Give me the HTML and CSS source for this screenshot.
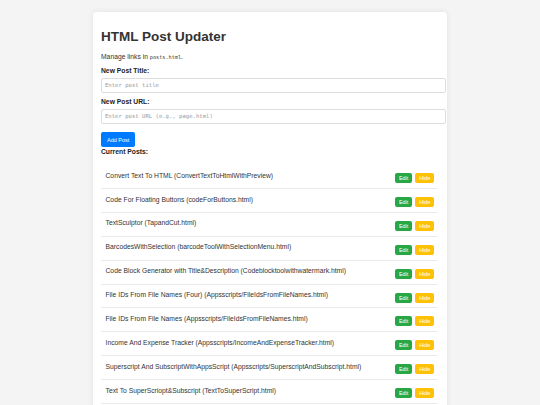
FILE: index.html
```html
<!DOCTYPE html>
<html lang="en">
<head>
<meta charset="utf-8">
<title>HTML Post Updater</title>
<link rel="stylesheet" href="styles.css">
</head>
<body>
<div class="card">
  <h1 class="title">HTML Post Updater</h1>
  <p class="intro">Manage links in <code class="code">posts.html</code>.</p>
  <label class="label" for="t">New Post Title:</label>
  <input class="field" id="t" type="text" placeholder="Enter post title">
  <label class="label" for="u">New Post URL:</label>
  <input class="field" id="u" type="text" placeholder="Enter post URL (e.g., page.html)">
  <button class="add-btn">Add Post</button>
  <div class="section-title">Current Posts:</div>
  <ul class="posts">
    <li class="post"><span class="post-text">Convert Text To HTML (ConvertTextToHtmlWithPreview)</span><span class="actions"><button class="btn edit">Edit</button><button class="btn hide">Hide</button></span></li>
    <li class="post"><span class="post-text">Code For Floating Buttons (codeForButtons.html)</span><span class="actions"><button class="btn edit">Edit</button><button class="btn hide">Hide</button></span></li>
    <li class="post"><span class="post-text">TextSculptor (TapandCut.html)</span><span class="actions"><button class="btn edit">Edit</button><button class="btn hide">Hide</button></span></li>
    <li class="post"><span class="post-text">BarcodesWithSelection (barcodeToolWithSelectionMenu.html)</span><span class="actions"><button class="btn edit">Edit</button><button class="btn hide">Hide</button></span></li>
    <li class="post"><span class="post-text">Code Block Generator with Title&amp;Description (Codeblocktoolwithwatermark.html)</span><span class="actions"><button class="btn edit">Edit</button><button class="btn hide">Hide</button></span></li>
    <li class="post"><span class="post-text">File IDs From File Names (Four) (Appsscripts/FileIdsFromFileNames.html)</span><span class="actions"><button class="btn edit">Edit</button><button class="btn hide">Hide</button></span></li>
    <li class="post"><span class="post-text">File IDs From File Names (Appsscripts/FileIdsFromFileNames.html)</span><span class="actions"><button class="btn edit">Edit</button><button class="btn hide">Hide</button></span></li>
    <li class="post"><span class="post-text">Income And Expense Tracker (Appsscripts/IncomeAndExpenseTracker.html)</span><span class="actions"><button class="btn edit">Edit</button><button class="btn hide">Hide</button></span></li>
    <li class="post"><span class="post-text">Superscript And SubscriptWithAppsScript (Appsscripts/SuperscriptAndSubscript.html)</span><span class="actions"><button class="btn edit">Edit</button><button class="btn hide">Hide</button></span></li>
    <li class="post"><span class="post-text">Text To SuperScriopt&amp;Subscript (TextToSuperScript.html)</span><span class="actions"><button class="btn edit">Edit</button><button class="btn hide">Hide</button></span></li>
  </ul>
</div>
</body>
</html>
```
FILE: styles.css
```css
html, body {
  margin: 0;
  padding: 0;
}
body {
  background: #f4f4f4;
  font-family: "Liberation Sans", Arial, sans-serif;
  font-size: 6.75px;
  color: #333;
  padding-top: 12px;
}
.card {
  box-sizing: border-box;
  width: 354px;
  margin: 0 auto;
  padding: 8px 9px 8px 8px;
  background: #fff;
  border-radius: 4px;
  box-shadow: 0 0 6px rgba(0, 0, 0, 0.08);
}
.title {
  font-size: 13.5px;
  font-weight: bold;
  margin: 9px 0;
  line-height: normal;
  color: #333;
}
.intro {
  margin: 6.75px 0;
  line-height: normal;
}
.code {
  font-family: "DejaVu Sans Mono", "Liberation Mono", monospace;
  font-size: 5.2px;
}
.label {
  display: block;
  font-weight: bold;
  line-height: normal;
  margin-bottom: 3.8px;
  color: #222;
}
.field {
  display: block;
  width: 100%;
  height: 7px;
  padding: 3px;
  margin: 0 0 5.5px;
  border: 1px solid #ddd;
  border-radius: 2px;
  font-family: "DejaVu Sans Mono", "Liberation Mono", monospace;
  font-size: 5.6px;
  line-height: 7px;
  background: #fff;
  outline: none;
}
.field::placeholder {
  color: #9a9a9a;
}
.add-btn {
  display: block;
  margin-top: 8.4px;
  padding: 4.5px 6px;
  border: none;
  border-radius: 2px;
  background: #007bff;
  color: #fff;
  font-family: "Liberation Sans", Arial, sans-serif;
  font-size: 5.5px;
  line-height: 6px;
}
.section-title {
  margin-top: 0.5px;
  font-weight: bold;
  line-height: normal;
  color: #222;
}
.posts {
  list-style: none;
  margin: 10.4px 0 0;
  padding: 0;
}
.post {
  display: flex;
  justify-content: space-between;
  align-items: flex-start;
  padding: 6.5px 3.7px 4.9px 4.5px;
  border-bottom: 1px solid #eaeaea;
  line-height: normal;
}
.post-text {
  color: #333;
}
.actions {
  display: flex;
  gap: 3px;
  margin-top: 1.5px;
  flex-shrink: 0;
}
.btn {
  border: none;
  border-radius: 2px;
  padding: 2px 4px;
  font-family: "Liberation Sans", Arial, sans-serif;
  font-size: 5.4px;
  line-height: 6px;
  color: #fff;
}
.edit {
  background: #28a745;
}
.hide {
  background: #ffc107;
}
```
